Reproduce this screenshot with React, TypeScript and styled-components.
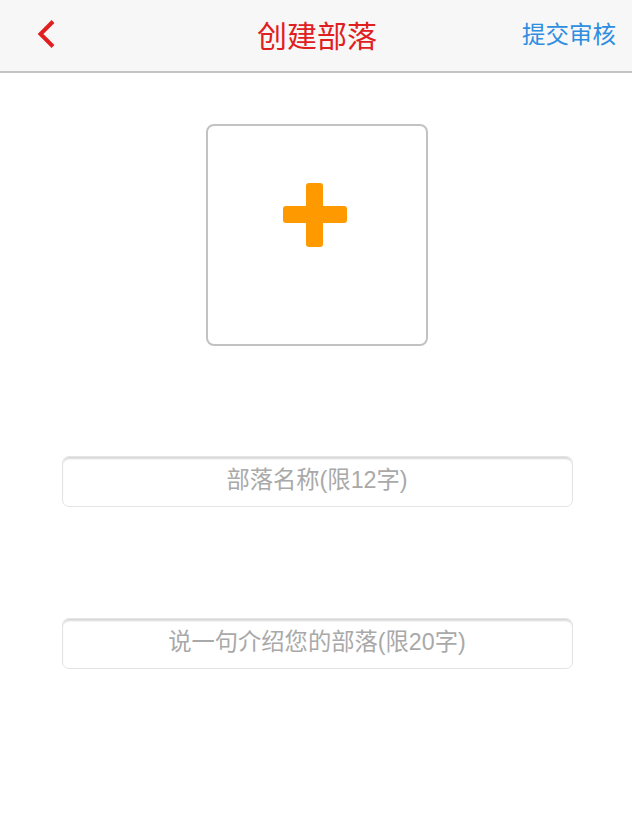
import React from "react";
import styled, { createGlobalStyle } from "styled-components";

const Global = createGlobalStyle`
  html, body { margin: 0; padding: 0; background: #fff; }
  body { font-family: "Helvetica Neue", "Liberation Sans", "Noto Sans CJK SC", sans-serif; }
  * { box-sizing: border-box; }
`;

const Page = styled.div`
  width: 632px;
  min-height: 840px;
  background: #fff;
  display: flex;
  flex-direction: column;
`;

const Header = styled.header`
  height: 73px;
  background: #f7f7f7;
  border-bottom: 2px solid #c4c4c4;
  display: grid;
  grid-template-columns: 120px 1fr 120px;
  align-items: center;
  padding-bottom: 3px;
`;

const BackButton = styled.button`
  justify-self: start;
  margin-left: 36px;
  padding: 0;
  border: none;
  background: none;
  display: flex;
  align-items: center;
  cursor: pointer;
`;

const Title = styled.h1`
  margin: 0 0 0 2px;
  text-align: center;
  font-size: 30px;
  line-height: 1;
  font-weight: 400;
  color: #e02020;
  font-family: "Noto Sans CJK SC", sans-serif;
`;

const Submit = styled.button`
  justify-self: end;
  margin-right: 16px;
  padding: 0;
  border: none;
  background: none;
  font-size: 23.5px;
  line-height: 1;
  color: #2f8ee0;
  font-family: "Noto Sans CJK SC", sans-serif;
  white-space: nowrap;
  cursor: pointer;
`;

const Body = styled.main`
  display: flex;
  flex-direction: column;
  align-items: center;
  padding-top: 51px;
  padding-left: 2px;
`;

const Upload = styled.button`
  width: 222px;
  height: 222px;
  border: 2px solid #c2c2c2;
  border-radius: 8px;
  background: #fff;
  padding: 57px 5px 0 0;
  display: flex;
  justify-content: center;
  align-items: flex-start;
  cursor: pointer;
`;

const Field = styled.input<{ $top: number }>`
  margin-top: ${(p) => p.$top}px;
  width: 511px;
  height: 51px;
  border: 1px solid #e4e4e4;
  border-radius: 7px;
  box-shadow: inset 0 3px 2px -1px rgba(0, 0, 0, 0.16);
  background: #fff;
  text-align: center;
  font-size: 23.3px;
  font-family: "Helvetica Neue", "Liberation Sans", "Noto Sans CJK SC", sans-serif;
  color: #333;
  outline: none;
  padding: 0 12px 2px;
  &::placeholder { color: #a9a9a9; }
`;

export default function App() {
  return (
    <Page>
      <Global />
      <Header>
        <BackButton aria-label="返回">
          <svg width="20" height="28" viewBox="0 0 20 28">
            <path d="M17 1.5 L4.5 14 L17 26.5" fill="none" stroke="#e02020" strokeWidth="4" strokeLinecap="butt" strokeLinejoin="miter" />
          </svg>
        </BackButton>
        <Title>创建部落</Title>
        <Submit>提交审核</Submit>
      </Header>
      <Body>
        <Upload aria-label="上传">
          <svg width="64" height="64" viewBox="0 0 64 64">
            <rect x="23" y="0" width="17" height="64" rx="3" fill="#ff9900" />
            <rect x="0" y="23" width="64" height="17" rx="3" fill="#ff9900" />
          </svg>
        </Upload>
        <Field $top={110} placeholder="部落名称(限12字)" />
        <Field $top={111} placeholder="说一句介绍您的部落(限20字)" />
      </Body>
    </Page>
  );
}
